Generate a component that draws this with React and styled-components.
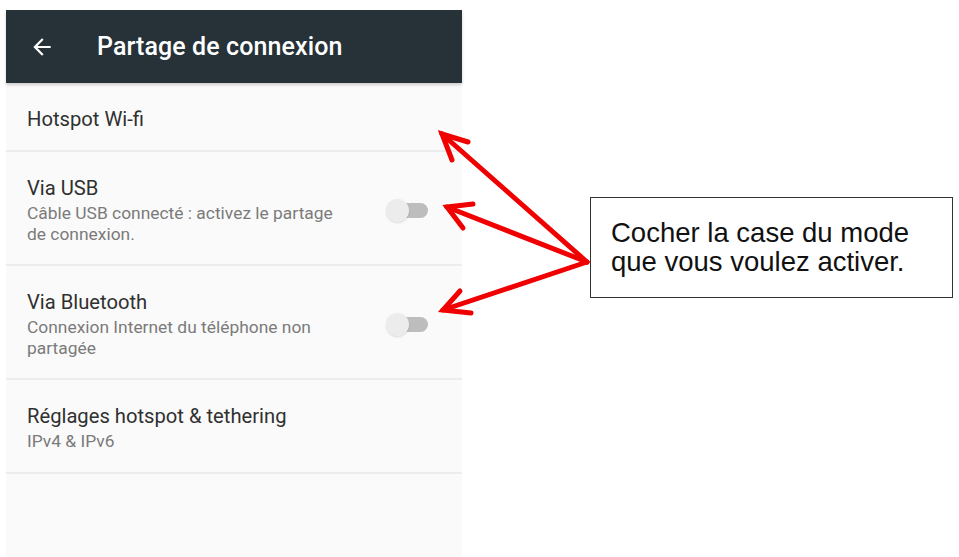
import React from 'react'
import styled, { createGlobalStyle } from 'styled-components'

const GlobalStyle = createGlobalStyle`
  html, body {
    margin: 0;
    padding: 0;
    background: #ffffff;
  }
  body {
    font-family: Roboto, "Noto Sans", sans-serif;
    overflow: hidden;
  }
`

const Page = styled.div`
  position: relative;
  display: flex;
  align-items: flex-start;
  width: 959px;
  height: 557px;
  overflow: hidden;
`

const Phone = styled.div`
  margin: 10px 0 0 6px;
  width: 456px;
  height: 547px;
  background: #fafafa;
  display: flex;
  flex-direction: column;
`

const Toolbar = styled.div`
  height: 73px;
  flex-shrink: 0;
  background: #263238;
  display: flex;
  align-items: center;
  padding-left: 23px;
  gap: 42px;
  box-shadow: 0 2px 3px rgba(0, 0, 0, 0.18);
  position: relative;
  z-index: 1;
`

const Title = styled.h1`
  margin: 0;
  color: #ffffff;
  font-family: Roboto, sans-serif;
  font-weight: 500;
  font-size: 25px;
  letter-spacing: 0.1px;
`

const Row = styled.div`
  display: flex;
  align-items: center;
  justify-content: space-between;
  padding: 23px 34px ${(p) => p.$bottom || 19}px 21px;
  border-bottom: 2px solid #ececec;
`

const Texts = styled.div`
  width: 322px;
  display: flex;
  flex-direction: column;
`

const ItemTitle = styled.div`
  font-size: 20.2px;
  line-height: 26px;
  color: #303030;
`

const ItemSub = styled.div`
  margin-top: 2px;
  font-size: 17.4px;
  line-height: 21px;
  color: #7a7a7a;
`

const Switch = styled.div`
  position: relative;
  width: 42px;
  height: 24px;
  flex-shrink: 0;
`

const Track = styled.div`
  position: absolute;
  left: 6px;
  top: 5px;
  width: 36px;
  height: 15px;
  border-radius: 8px;
  background: #bdbdbd;
`

const Thumb = styled.div`
  position: absolute;
  left: 0;
  top: 1px;
  width: 23px;
  height: 23px;
  border-radius: 50%;
  background: #ececec;
  box-shadow: 0 1px 2px rgba(0, 0, 0, 0.12);
`

const Callout = styled.div`
  margin: 197px 0 0 128px;
  width: 363px;
  height: 101px;
  flex-shrink: 0;
  box-sizing: border-box;
  border: 1.5px solid #333333;
  padding: 20px 0 0 20px;
  font-family: "Liberation Sans", Arial, sans-serif;
  font-size: 27.5px;
  line-height: 29px;
  color: #111111;
`

const Overlay = styled.svg`
  position: absolute;
  left: 0;
  top: 0;
  pointer-events: none;
`

const BackArrow = () => (
  <svg width="26" height="26" viewBox="0 0 24 24">
    <path d="M20 11H7.83l5.59-5.59L12 4l-8 8 8 8 1.41-1.41L7.83 13H20v-2z" fill="#ffffff" />
  </svg>
)

const Toggle = () => (
  <Switch>
    <Track />
    <Thumb />
  </Switch>
)

const arrows = [
  { tip: [442, 134], barbs: [[468, 142], [452, 160]] },
  { tip: [447, 207], barbs: [[473, 204], [463, 228]] },
  { tip: [443, 310], barbs: [[460, 291], [471, 313]] },
]

const items = [
  { title: 'Hotspot Wi-fi', bottom: 18 },
  { title: 'Via USB', sub: 'Câble USB connecté : activez le partage de connexion.', toggle: true },
  { title: 'Via Bluetooth', sub: 'Connexion Internet du téléphone non partagée', toggle: true },
  { title: 'Réglages hotspot & tethering', sub: 'IPv4 & IPv6', bottom: 20 },
]

const App = () => {
  const origin = [587, 262]
  return (
    <Page>
      <GlobalStyle />
      <Phone>
        <Toolbar>
          <BackArrow />
          <Title>Partage de connexion</Title>
        </Toolbar>
        {items.map((it) => (
          <Row key={it.title} $bottom={it.bottom}>
            <Texts>
              <ItemTitle>{it.title}</ItemTitle>
              {it.sub && <ItemSub>{it.sub}</ItemSub>}
            </Texts>
            {it.toggle && <Toggle />}
          </Row>
        ))}
      </Phone>

      <Callout>
        Cocher la case du mode
        <br />
        que vous voulez activer.
      </Callout>

      {/* flèches rouges */}
      <Overlay width="959" height="557">
        {arrows.map((a, i) => (
          <g key={i} stroke="#f00000" strokeWidth="5" strokeLinecap="round" fill="none">
            <line x1={origin[0]} y1={origin[1]} x2={a.tip[0]} y2={a.tip[1]} />
            <polyline points={`${a.barbs[0][0]},${a.barbs[0][1]} ${a.tip[0]},${a.tip[1]} ${a.barbs[1][0]},${a.barbs[1][1]}`} strokeLinejoin="miter" />
          </g>
        ))}
      </Overlay>
    </Page>
  )
}

export default App
